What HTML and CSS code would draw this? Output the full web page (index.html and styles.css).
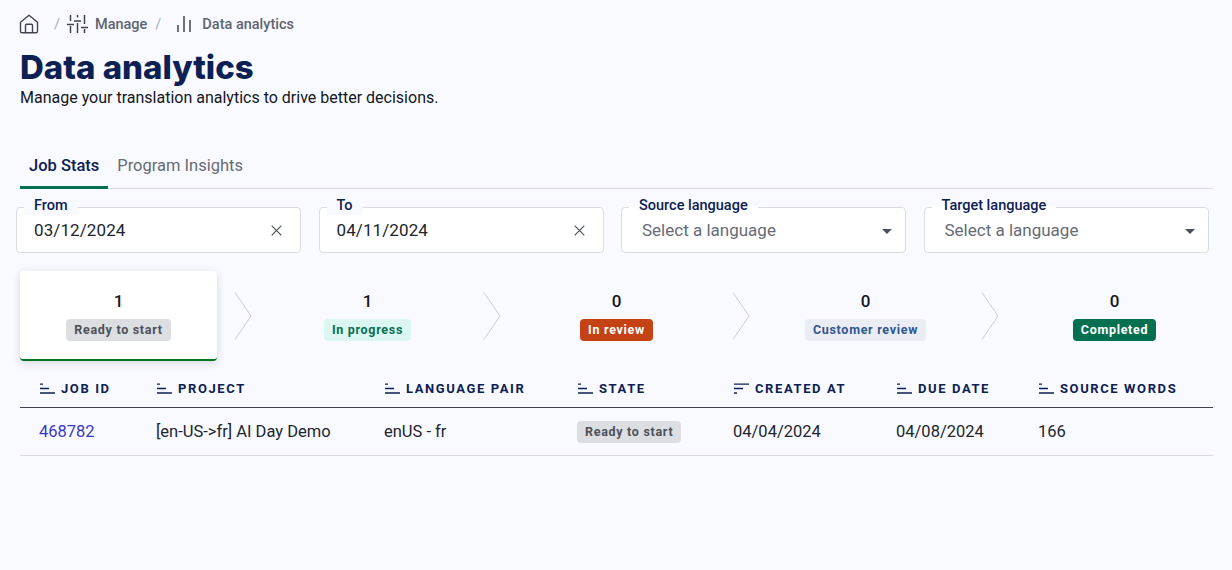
FILE: index.html
```html
<!DOCTYPE html>
<html lang="en">
<head>
<meta charset="utf-8">
<title>Data analytics</title>
<link rel="stylesheet" href="styles.css">
</head>
<body>
<main class="page">
  <nav class="crumbs">
    <svg class="icon-home" width="20" height="20" viewBox="0 0 20 20" fill="none" stroke="#3f4450" stroke-width="1.4" stroke-linejoin="round"><path d="M1.5 8.2 10 1.2l8.500 7v9a1.600 1.600 0 0 1-1.600 1.600H3.100a1.600 1.600 0 0 1-1.600-1.600z"/><path d="M6.500 18.800v-7.600a1 1 0 0 1 1-1h5a1 1 0 0 1 1 1v7.600"/></svg>
    <span class="sep sep-first">/</span>
    <svg class="icon-manage" width="21" height="18" viewBox="0 0 21 18" fill="none" stroke="#3f4450" stroke-width="1.500"><path d="M3.500 0v6M0 9.500h7M3.500 11v7M10.500 0v2.500M7 6h7M10.500 8v10M17.500 0v9M14 12.500h7M17.500 14v4"/></svg>
    <span class="crumb">Manage</span>
    <span class="sep">/</span>
    <svg class="icon-bars" width="14" height="16" viewBox="0 0 14 16" fill="none" stroke="#3f4450" stroke-width="1.500"><path d="M1 9v7M7 0v16M13 4v12"/></svg>
    <span class="crumb">Data analytics</span>
  </nav>
  <h1 class="title">Data analytics</h1>
  <p class="subtitle">Manage your translation analytics to drive better decisions.</p>

  <div class="tabs">
    <span class="tab tab-active">Job Stats</span>
    <span class="tab">Program Insights</span>
  </div>

  <section class="filters">
    <div class="field">
      <span class="field-label">From</span>
      <span class="field-value">03/12/2024</span>
      <svg class="clear" width="11" height="11" viewBox="0 0 11 11" fill="none" stroke="#4a4f5a" stroke-width="1.200"><path d="M.7.7l9.600 9.600M10.300.7.700 10.300"/></svg>
    </div>
    <div class="field">
      <span class="field-label">To</span>
      <span class="field-value">04/11/2024</span>
      <svg class="clear" width="11" height="11" viewBox="0 0 11 11" fill="none" stroke="#4a4f5a" stroke-width="1.200"><path d="M.7.7l9.600 9.600M10.300.7.700 10.300"/></svg>
    </div>
    <div class="field field-select">
      <span class="field-label">Source language</span>
      <span class="field-placeholder">Select a language</span>
      <span class="caret"></span>
    </div>
    <div class="field field-select">
      <span class="field-label">Target language</span>
      <span class="field-placeholder">Select a language</span>
      <span class="caret"></span>
    </div>
  </section>

  <section class="steps">
    <div class="step step-active">
      <span class="count">1</span>
      <span class="badge badge-grey">Ready to start</span>
    </div>
    <svg class="chevron" width="18" height="48" viewBox="0 0 18 48" fill="none" stroke="#c9ccd3"><path d="M1 .5 17 24 1 47.500"/></svg>
    <div class="step">
      <span class="count">1</span>
      <span class="badge badge-mint">In progress</span>
    </div>
    <svg class="chevron" width="18" height="48" viewBox="0 0 18 48" fill="none" stroke="#c9ccd3"><path d="M1 .5 17 24 1 47.500"/></svg>
    <div class="step">
      <span class="count">0</span>
      <span class="badge badge-red">In review</span>
    </div>
    <svg class="chevron" width="18" height="48" viewBox="0 0 18 48" fill="none" stroke="#c9ccd3"><path d="M1 .5 17 24 1 47.500"/></svg>
    <div class="step">
      <span class="count">0</span>
      <span class="badge badge-blue">Customer review</span>
    </div>
    <svg class="chevron" width="18" height="48" viewBox="0 0 18 48" fill="none" stroke="#c9ccd3"><path d="M1 .5 17 24 1 47.500"/></svg>
    <div class="step">
      <span class="count">0</span>
      <span class="badge badge-green">Completed</span>
    </div>
  </section>

  <section class="table">
    <div class="row row-head">
      <div class="th"><svg class="sort" width="17" height="11" viewBox="0 0 17 11" fill="none" stroke="#0c2054" stroke-width="1.300"><path d="M1 1.200h3M1 5.500h9M1 10h15"/></svg>JOB ID</div>
      <div class="th"><svg class="sort" width="17" height="11" viewBox="0 0 17 11" fill="none" stroke="#0c2054" stroke-width="1.300"><path d="M1 1.200h3M1 5.500h9M1 10h15"/></svg>PROJECT</div>
      <div class="th"><svg class="sort" width="17" height="11" viewBox="0 0 17 11" fill="none" stroke="#0c2054" stroke-width="1.300"><path d="M1 1.200h3M1 5.500h9M1 10h15"/></svg>LANGUAGE PAIR</div>
      <div class="th"><svg class="sort" width="17" height="11" viewBox="0 0 17 11" fill="none" stroke="#0c2054" stroke-width="1.300"><path d="M1 1.200h3M1 5.500h9M1 10h15"/></svg>STATE</div>
      <div class="th"><svg class="sort" width="17" height="11" viewBox="0 0 17 11" fill="none" stroke="#0c2054" stroke-width="1.300"><path d="M1 1.200h15M1 5.500h9M1 10h3"/></svg>CREATED AT</div>
      <div class="th"><svg class="sort" width="17" height="11" viewBox="0 0 17 11" fill="none" stroke="#0c2054" stroke-width="1.300"><path d="M1 1.200h3M1 5.500h9M1 10h15"/></svg>DUE DATE</div>
      <div class="th"><svg class="sort" width="17" height="11" viewBox="0 0 17 11" fill="none" stroke="#0c2054" stroke-width="1.300"><path d="M1 1.200h3M1 5.500h9M1 10h15"/></svg>SOURCE WORDS</div>
    </div>
    <div class="row row-body">
      <div class="td"><a class="job-link" href="#">468782</a></div>
      <div class="td">[en-US-&gt;fr] AI Day Demo</div>
      <div class="td">enUS - fr</div>
      <div class="td"><span class="badge badge-grey">Ready to start</span></div>
      <div class="td">04/04/2024</div>
      <div class="td">04/08/2024</div>
      <div class="td">166</div>
    </div>
  </section>
</main>
</body>
</html>
```
FILE: styles.css
```css
* { box-sizing: border-box; }
html, body { margin: 0; height: 100%; }
body {
  background: #f9faff;
  font-family: Roboto, "Noto Sans", sans-serif;
  color: #14161c;
  overflow: hidden;
}
.page { padding: 14px 19px 0 20px; width: 1232px; }

.crumbs { display: flex; align-items: center; height: 20px; color: #5f6470; font-size: 14.500px; font-weight: 500; }
.icon-home { margin-right: 8px; margin-left: -1px; }
.sep { color: #a9adb6; font-weight: 400; margin: 0 7px 0 0; }
.sep-first { margin-left: 7px; margin-right: 7px; }
.icon-manage { margin-right: 7px; }
.crumb { margin-right: 8px; }
.icon-bars { margin: 0 11px 0 9px; }

.title { margin: 13px 0 0; font-family: Inter, sans-serif; font-size: 33px; line-height: 40px; font-weight: 800; color: #0c2054; letter-spacing: 0; }
.subtitle { margin: 1px 0 0; font-size: 16px; line-height: 20px; color: #14161c; }

.tabs { display: flex; margin-top: 37px; border-bottom: 1px solid #d9dce3; height: 44px; }
.tab { padding: 10px 9px 0; height: 44px; font-size: 16.500px; line-height: 22px; color: #666b76; margin-right: 0; }
.tab-active { color: #0c2054; font-weight: 500; border-bottom: 3px solid #04704f; }

.filters { display: grid; grid-template-columns: repeat(4, 285px); column-gap: 17.500px; margin: 18px 0 0 -4px; }
.field { position: relative; height: 46px; background: #fff; border: 1px solid #d9dce3; border-radius: 4px; display: flex; align-items: center; justify-content: space-between; padding: 0 18px 0 17px; font-size: 17px; }
.field-label { position: absolute; left: 7px; top: -11px; height: 18px; padding: 0 10px; background: #f9faff; border-radius: 2px; font-size: 14.500px; line-height: 18px; font-weight: 500; color: #0c2054; white-space: nowrap; }
.field-value { letter-spacing: .1px; color: #22252c; }
.field-placeholder { color: #666b76; margin-left: 3px; }
.field-select { padding-right: 13px; padding-left: 17px; }
.field-select .field-label { background: linear-gradient(#f9faff 50%, #fff 50%); }
.caret { width: 0; height: 0; border-left: 5px solid transparent; border-right: 5px solid transparent; border-top: 5px solid #4a4f5a; margin-top: 2px; }

.steps { display: grid; grid-template-columns: 197px 18px 197px 18px 197px 18px 197px 18px 197px; column-gap: 17px; margin-top: 18px; height: 90px; align-items: center; width: 1193px; }
.chevron { margin-top: 0; }
.step { display: flex; flex-direction: column; align-items: center; height: 90px; padding-top: 20px; margin: 0; }
.step-active { background: #fff; border-radius: 4px; border-bottom: 2px solid #04751f; box-shadow: 0 2px 8px rgba(30, 40, 70, .16); }
.count { font-size: 17px; line-height: 20px; font-weight: 500; color: #14161c; margin-bottom: 8px; }
.badge { display: inline-block; height: 22px; padding: 0 8px; border-radius: 4px; font-size: 12.500px; line-height: 22px; font-weight: 700; letter-spacing: .7px; white-space: nowrap; }
.badge-grey { background: #dcdee2; color: #4c5058; }
.badge-mint { background: #dcf6f1; color: #04704f; }
.badge-red { background: #c44214; color: #fff; }
.badge-blue { background: #ebedf5; color: #31568f; }
.badge-green { background: #04704f; color: #fff; }

.table { width: 1193px; margin-top: 9px; }
.row { display: grid; grid-template-columns: 117px 228px 193px 156px 163px 142px 194px; align-items: center; }
.row-head { height: 38px; border-bottom: 1px solid #3f4450; }
.row-body { height: 48px; border-bottom: 1px solid #d9dce3; }
.th { display: flex; align-items: center; padding-left: 19px; font-size: 13px; font-weight: 700; letter-spacing: 1.600px; color: #0c2054; white-space: nowrap; }
.sort { margin-right: 5px; flex: none; }
.td { padding-left: 19px; font-size: 16.500px; color: #22252c; white-space: nowrap; }
.job-link { color: #3a37c4; text-decoration: none; }
```
